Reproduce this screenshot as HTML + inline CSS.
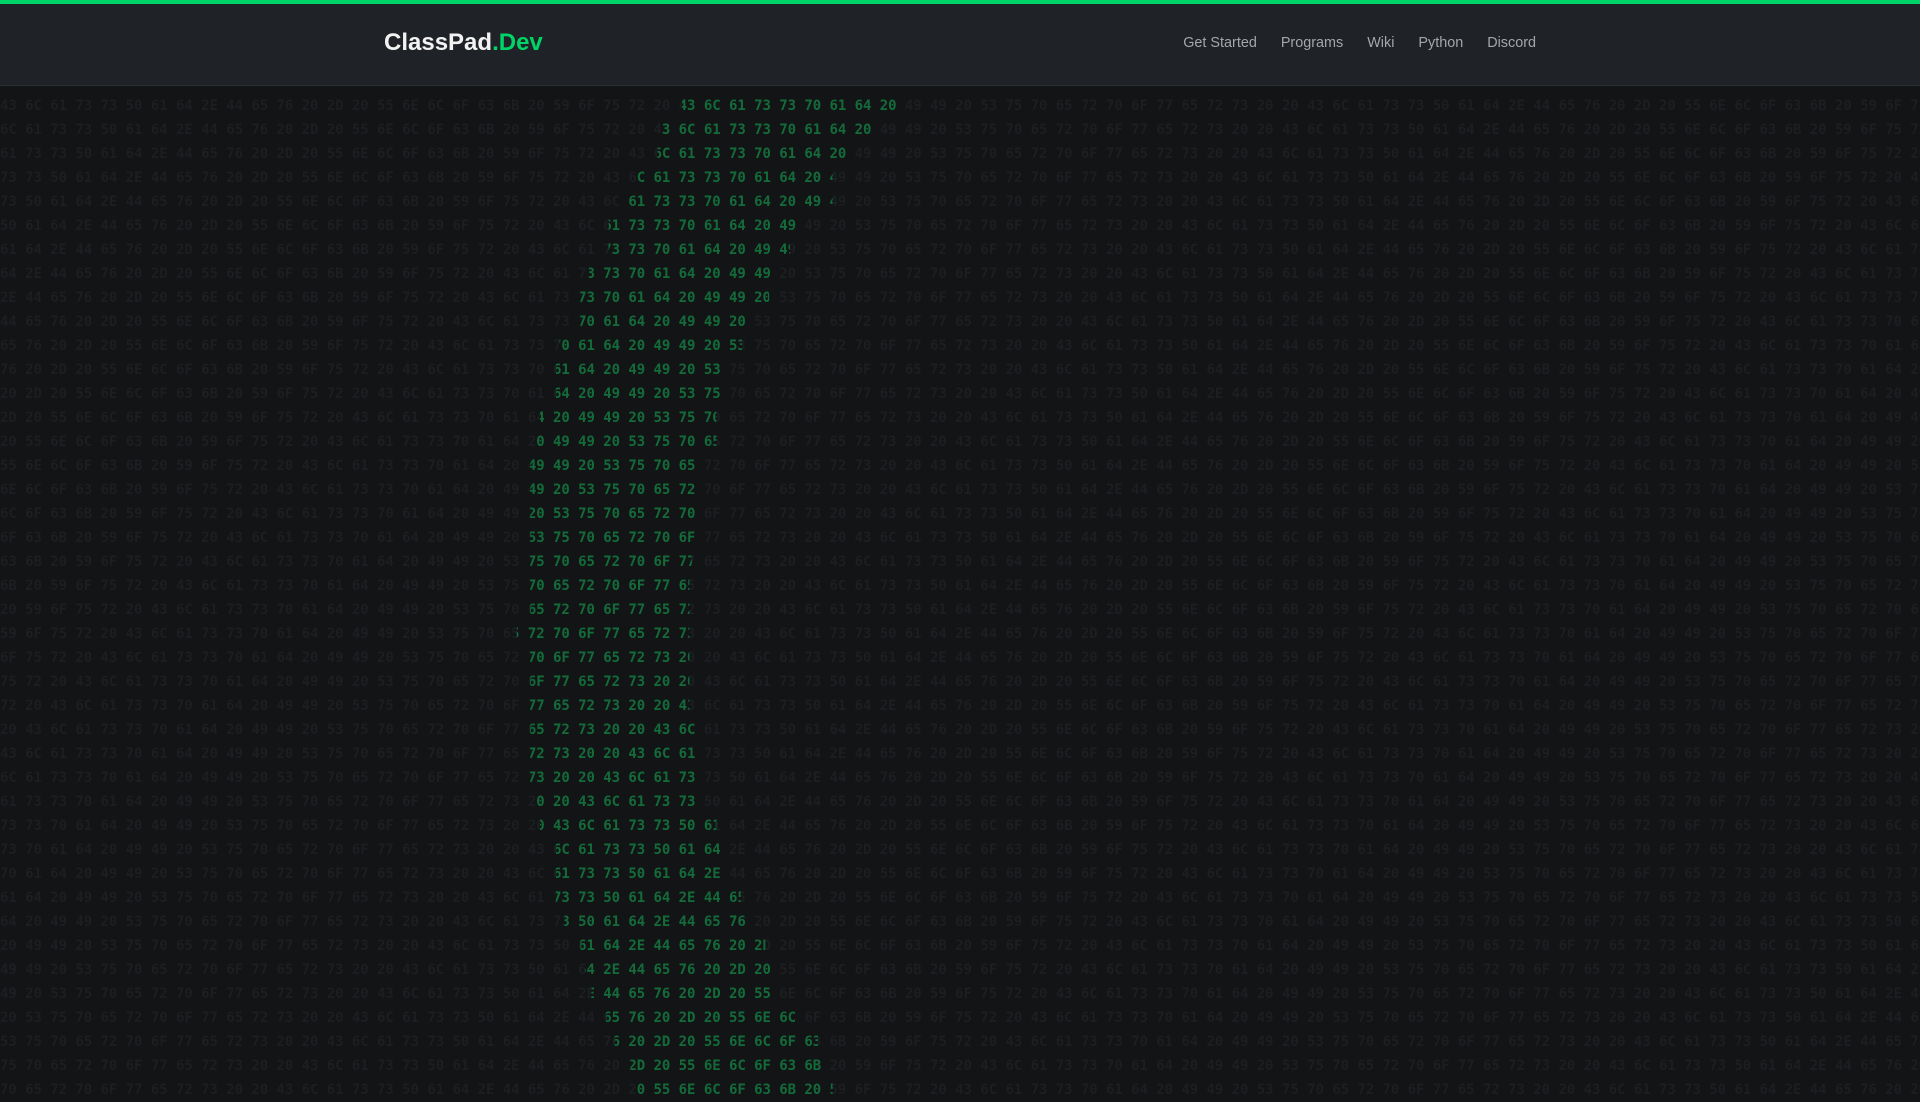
<!DOCTYPE html>
<html><head><meta charset="utf-8">
<style>
html,body{margin:0;padding:0;width:1920px;height:1080px;overflow:hidden;background:#131416;}
.bar{position:absolute;left:0;top:0;width:1920px;height:4px;background:#00d466;}
header{position:absolute;left:0;top:4px;width:1920px;height:81px;background:#1f2226;border-bottom:1px solid #2c2f33;}
.logo{position:absolute;left:384px;top:23px;font:bold 24px/32px "Liberation Sans",sans-serif;color:#f2f2f2;}
.logo span{color:#00d466;}
nav{position:absolute;right:384px;top:29px;display:flex;gap:24px;font:14.4px/20px "Liberation Sans",sans-serif;color:#a3a6aa;}
#grid{position:absolute;left:0;top:94px;width:1920px;}
.row{position:relative;height:24px;white-space:pre;font:bold 14px/24px "DejaVu Sans Mono",monospace;letter-spacing:-0.05px;}
.row .d,.row .g{position:absolute;left:0;top:0;width:1920px;overflow:hidden;}
.row .d{color:#1c1e21;}
.row .g{color:#136b3a;}
</style></head><body>
<div class="bar"></div>
<header><div class="logo">ClassPad<span>.Dev</span></div>
<nav><span>Get Started</span><span>Programs</span><span>Wiki</span><span>Python</span><span>Discord</span></nav></header>
<div id="grid"></div>
<script>
var s="ClassPad.Dev - Unlock Your Classpad II Superpowers  ";
var h=[];for(var i=0;i<s.length;i++){h.push(s.charCodeAt(i).toString(16).toUpperCase());}
h[5]="50";
var L=[557,541,537,520,513,497,497,481,474,474,457,454,454,441,438,433,433,433,433,433,433,433,422,433,433,433,433,433,433,438,441,454,454,454,461,474,478,483,495,502,515,520];
var R=[735,715,695,680,680,655,645,635,628,613,606,592,592,585,585,572,572,570,567,565,563,563,563,563,563,563,571,571,571,571,585,592,592,605,612,625,632,633,655,668,675,680];
var g=document.getElementById('grid'),out="";
for(var r=0;r<42;r++){var t=[];for(var c=0;c<80;c++){t.push(h[(r+c)%h.length]);}
var txt=t.join(" ");var l=L[r]*1.2245,rr=R[r]*1.2245;
out+='<div class="row"><span class="d">'+txt+'</span><span class="g" style="clip-path:inset(0 '+(1920-rr)+'px 0 '+l+'px)">'+txt+'</span></div>';}
g.innerHTML=out;
</script>
</body></html>
